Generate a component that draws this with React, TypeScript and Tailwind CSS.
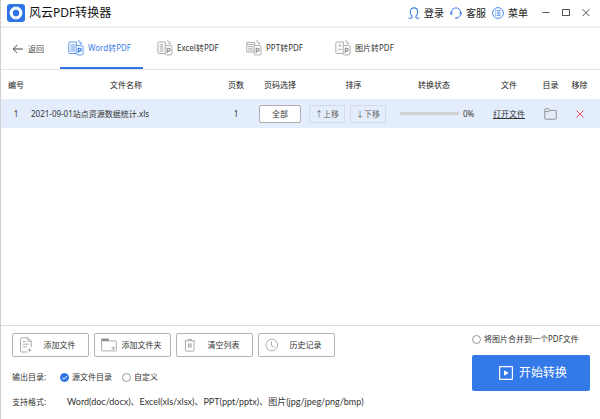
import { useState } from 'react';
import type { ReactNode } from 'react';

type TabId = 'word' | 'excel' | 'ppt' | 'image';

const tabs: { id: TabId; title: string }[] = [
  { id: 'word', title: 'Word转PDF' },
  { id: 'excel', title: 'Excel转PDF' },
  { id: 'ppt', title: 'PPT转PDF' },
  { id: 'image', title: '图片转PDF' }
];

const files = [
  { name: '2021-09-01站点资源数据统计.xls', pages: 1, progress: 0 }
];

function Logo() {
  return (
    <svg width="18" height="18" viewBox="0 0 18 18" aria-hidden="true">
      <rect width="18" height="18" rx="3" fill="#2f74e6" />
      <circle cx="9" cy="9" r="4.8" fill="none" stroke="#fff" strokeWidth="3.2" />
      <path d="M9 2.600v3.200M9 12.200v3.200" stroke="#9fc1f7" strokeWidth="0.8" />
    </svg>
  );
}

function UserIcon() {
  return (
    <svg width="12" height="12" viewBox="0 0 12 12" fill="none" stroke="#3b7fe8" strokeWidth="1.100" aria-hidden="true">
      <path d="M.5 11.200h2c1.400 0 2-.9 1.400-2C2.900 8 2.300 6.400 2.300 4.700 2.300 2.400 3.900.9 6 .9s3.700 1.500 3.700 3.800c0 1.700-.6 3.300-1.600 4.500-.6 1.100 0 2 1.400 2h2" />
    </svg>
  );
}

function HeadsetIcon() {
  return (
    <svg width="12" height="12" viewBox="0 0 12 12" fill="none" stroke="#3b7fe8" aria-hidden="true">
      <path d="M1.500 5C1.800 2.500 3.600.9 6 .9S10.200 2.500 10.500 5" />
      <path d="M1.300 4.800v3M10.700 4.800v3" strokeWidth="1.800" />
      <path d="M10.500 7.800c-.4 1.600-1.500 2.800-3.300 3.100" />
      <path d="M5.300 11h2" strokeWidth="1.500" />
    </svg>
  );
}

function MenuIcon() {
  return (
    <svg width="12" height="12" viewBox="0 0 12 12" fill="none" stroke="#3b7fe8" aria-hidden="true">
      <circle cx="6" cy="6" r="5.400" strokeWidth="0.900" />
      <path d="M4.700 3.800h4M4.700 6h4M4.700 8.200h4M2.900 3.800h1M2.900 6h1M2.900 8.200h1" />
    </svg>
  );
}

function ConvertIcon({ id }: { id: TabId }) {
  return (
    <svg width="16" height="16" viewBox="0 0 16 16" fill="none" stroke="currentColor" strokeWidth="0.8" aria-hidden="true">
      {id === 'ppt' ? (
        <>
          <path d="M8 12H.8V2.500h8V5" />
          <path d="M.8 4.500h8M2.200 6.500h5M2.200 8.200h5M2.200 10h5" strokeWidth="1.100" strokeDasharray="1.500 .5" />
        </>
      ) : (
        <path d="M8 13.500H2c-.8 0-1.200-.4-1.200-1.200V3.200C.8 2.400 1.200 2 2 2h6.600v3" />
      )}
      {id === 'word' && <path d="M2.500 5h5M2.500 7h4.500M2.500 9h4.500M2.500 11h4.500" />}
      {id === 'excel' && <path d="M2.500 5h5M2.500 7h4.500M2.500 9h4.500M2.500 11h4.500M4.800 4v8" strokeDasharray="1.500 .7" />}
      {id === 'image' && (
        <>
          <circle cx="5" cy="5.500" r="0.900" />
          <path d="M2.500 11l2-2.500 1.500 1.500 1-1" />
        </>
      )}
      <path d="M10 .8c1.800 0 2.700 1 2.800 3M11.400 2.800l1.400 1.400 1.200-1.500" />
      <path d="M8.200 5.600h5.600c.8 0 1.200.4 1.200 1.200v6.900c0 .8-.4 1.200-1.200 1.200H9.400c-.8 0-1.200-.4-1.200-1.200z" />
      <path d="M10.300 13V8.300h1.500a1.300 1.300 0 010 2.700h-1.500" strokeWidth="1.300" />
    </svg>
  );
}

function AddFileIcon() {
  return (
    <svg width="16" height="16" viewBox="0 0 16 16" fill="none" stroke="#999" strokeWidth="0.8" aria-hidden="true">
      <path d="M8.500 15H2.600c-.7 0-1.100-.4-1.100-1.100V1.900C1.500 1.200 1.900.8 2.600.8H9l3.300 3.300V10M9 .8v3.400h3.300" />
      <path d="M3.800 4.500h3M3.800 7.200h6M3.800 9.900h4" />
      <path d="M10.500 11.300v3.700M8.700 13.100h3.700" />
    </svg>
  );
}

function AddFolderIcon() {
  return (
    <svg width="16" height="16" viewBox="0 0 16 16" fill="none" stroke="#999" strokeWidth="0.8" aria-hidden="true">
      <path d="M.6 3.500V13c0 .6.3.9.9.9h13c.6 0 .9-.3.900-.9V4.800c0-.6-.3-.9-.9-.9H.6" />
      <path d="M.3 2.700h7.500" strokeWidth="2.200" stroke="#888" />
      <path d="M12.300 9.200v3.800M10.400 11.100h3.800" />
    </svg>
  );
}

function TrashIcon() {
  return (
    <svg width="16" height="16" viewBox="0 0 16 16" fill="none" stroke="#999" strokeWidth="0.8" aria-hidden="true">
      <path d="M2.500 4v9.200c0 .6.300.9.900.9h6.700c.6 0 .9-.3.900-.9V4M1.500 3.800H12M4.800 3.600V2.500h4v1.100M5.500 6.300v4.500M6.800 6.300v4.500M8.100 6.300v4.500" />
    </svg>
  );
}

function ClockIcon() {
  return (
    <svg width="16" height="16" viewBox="0 0 16 16" fill="none" stroke="#999" strokeWidth="0.8" aria-hidden="true">
      <circle cx="6.800" cy="8" r="5.800" />
      <path d="M6.500 4.300v4.300l3 1.300" />
    </svg>
  );
}

const actions = [
  { title: '添加文件', icon: <AddFileIcon /> },
  { title: '添加文件夹', icon: <AddFolderIcon /> },
  { title: '清空列表', icon: <TrashIcon /> },
  { title: '历史记录', icon: <ClockIcon /> }
];

function HeaderLink({ icon, children }: { icon: ReactNode; children: ReactNode }) {
  return (
    <button className="flex items-center gap-1 text-[10px] leading-3">
      {icon}
      {children}
    </button>
  );
}

function TitleBar() {
  return (
    <header className="flex h-7 items-center border-b-2 border-[#eeeeee] pl-1.5 pr-2.5">
      <Logo />
      <h1 className="ml-1 text-[12px] leading-4 text-[#111]">风云PDF转换器</h1>
      <div className="ml-auto flex items-center gap-1.5 text-[#222]">
        <HeaderLink icon={<UserIcon />}>登录</HeaderLink>
        <HeaderLink icon={<HeadsetIcon />}>客服</HeaderLink>
        <HeaderLink icon={<MenuIcon />}>菜单</HeaderLink>
      </div>
      <div className="ml-3.5 flex items-center gap-3 text-[#555]">
        <button aria-label="最小化">
          <svg width="8" height="8" viewBox="0 0 8 8" stroke="currentColor"><path d="M.5 3.500h7" /></svg>
        </button>
        <button aria-label="最大化">
          <svg width="8" height="8" viewBox="0 0 8 8" fill="none" stroke="currentColor"><rect x=".5" y=".5" width="7" height="6" /></svg>
        </button>
        <button aria-label="关闭">
          <svg width="8" height="8" viewBox="0 0 8 8" stroke="currentColor"><path d="M.5.2l7 7M7.500.2l-7 7" /></svg>
        </button>
      </div>
    </header>
  );
}

function TabBar({ active, onChange }: { active: TabId; onChange: (id: TabId) => void }) {
  return (
    <nav className="flex h-[42px] border-b border-[#e4e4e4]">
      <button className="flex w-[59px] shrink-0 items-center gap-1 pl-[11px] text-[#444]">
        <svg width="12" height="12" viewBox="0 0 12 12" fill="none" stroke="currentColor" aria-hidden="true">
          <path d="M11 6H1.200M5.200 2L1.200 6l4 4" />
        </svg>
        返回
      </button>
      <div className="flex gap-1.5">
        {tabs.map((tab) => (
          <button
            key={tab.id}
            onClick={() => onChange(tab.id)}
            className={`flex w-[83px] items-center gap-1 border-b-2 pl-2 ${
              tab.id === active ? 'border-[#2f74e6] text-[#3b7fe8]' : 'border-transparent text-[#333]'
            }`}
          >
            <span className={tab.id === active ? 'text-[#3b7fe8]' : 'text-[#999]'}>
              <ConvertIcon id={tab.id} />
            </span>
            {tab.title}
          </button>
        ))}
      </div>
    </nav>
  );
}

function FileTable() {
  return (
    <table className="w-full table-fixed text-center">
      <colgroup>
        <col className="w-[30px]" />
        <col />
        <col className="w-[30px]" />
        <col className="w-[58px]" />
        <col className="w-[89px]" />
        <col className="w-[84px]" />
        <col className="w-[54px]" />
        <col className="w-[29px]" />
        <col className="w-[35px]" />
      </colgroup>
      <thead>
        <tr className="h-[29px] text-[#222]">
          <th className="font-normal">编号</th>
          <th className="font-normal">文件名称</th>
          <th className="font-normal">页数</th>
          <th className="font-normal">页码选择</th>
          <th className="font-normal">排序</th>
          <th className="pr-3 font-normal">转换状态</th>
          <th className="font-normal">文件</th>
          <th className="font-normal">目录</th>
          <th className="pr-1.5 font-normal">移除</th>
        </tr>
      </thead>
      <tbody>
        {files.map((file, index) => (
          <tr key={file.name} className="h-[29px] bg-[#e4edfb]">
            <td>{index + 1}</td>
            <td className="text-left">{file.name}</td>
            <td>{file.pages}</td>
            <td>
              <button className="h-[18px] w-[42px] rounded-xs border border-[#b0b0b0] bg-white align-middle">全部</button>
            </td>
            <td className="pr-3">
              <div className="flex justify-center gap-[5px]">
                <button className="h-[18px] w-9 shrink-0 border border-[#d4dbe6] text-[#666]">↑上移</button>
                <button className="h-[18px] w-9 shrink-0 border border-[#d4dbe6] text-[#666]">↓下移</button>
              </div>
            </td>
            <td>
              <div className="flex items-center gap-1 pl-0.5">
                <div className="h-[3px] w-[59px] bg-[#d2d2d2]">
                  <div className="h-full bg-[#2f74e6]" style={{ width: `${file.progress}%` }} />
                </div>
                {file.progress}%
              </div>
            </td>
            <td>
              <a href="#open" className="underline underline-offset-1">打开文件</a>
            </td>
            <td>
              <button aria-label="打开目录" className="align-middle">
                <svg width="13" height="12" viewBox="0 0 13 12" fill="none" stroke="#888" strokeWidth="0.9">
                  <path d="M.8 3.600V1.500C.8 1 1 .8 1.500.8h3.300l1.200 1.600h5.500c.5 0 .7.200.7.700v7.400c0 .5-.2.700-.7.700h-10c-.5 0-.7-.2-.7-.7V3.600h4.200L6 2.400" />
                </svg>
              </button>
            </td>
            <td className="pr-1.5">
              <button aria-label="移除" className="align-middle">
                <svg width="8" height="8" viewBox="0 0 8 8" stroke="#e8505b">
                  <path d="M.5.5l7 7M7.500.5l-7 7" />
                </svg>
              </button>
            </td>
          </tr>
        ))}
      </tbody>
    </table>
  );
}

type ChoiceProps = {
  type: 'radio' | 'checkbox';
  label: string;
  checked: boolean;
  onChange: () => void;
};

function Choice({ type, label, checked, onChange }: ChoiceProps) {
  return (
    <label className="flex items-center gap-[3px]">
      <span className="relative flex">
        <input
          type={type}
          checked={checked}
          onChange={onChange}
          className="size-[9px] appearance-none rounded-full border border-[#999] bg-white checked:border-[#2f74e6] checked:bg-[#2f74e6]"
        />
        {checked && (
          <svg className="pointer-events-none absolute inset-0" width="9" height="9" viewBox="0 0 9 9" fill="none" stroke="#fff">
            <path d="M2.300 4.600l1.700 1.600 2.900-3.200" />
          </svg>
        )}
      </span>
      {label}
    </label>
  );
}

export default function App() {
  const [activeTab, setActiveTab] = useState<TabId>('word');
  const [output, setOutput] = useState('source');
  const [merge, setMerge] = useState(false);

  return (
    <div className="flex min-h-screen flex-col border-l border-[#cfcfcf] bg-white font-['Noto_Sans','Noto_Sans_CJK_SC',sans-serif] text-[8px] leading-3 text-[#333]">
      <TitleBar />
      <TabBar active={activeTab} onChange={setActiveTab} />
      <main className="flex-1">
        <FileTable />
      </main>
      <footer className="flex justify-between border-t border-[#dcdcdc] pb-[11px] pl-[11px] pr-2.5 pt-[7px]">
        <div>
          <div className="flex gap-[5px]">
            {actions.map((action) => (
              <button
                key={action.title}
                className="flex h-6 w-[77px] items-center rounded-xs border border-[#b4b4b4] pl-1.5 pr-1"
              >
                {action.icon}
                <span className="flex-1 text-center">{action.title}</span>
              </button>
            ))}
          </div>
          <div className="mt-3.5 flex items-center">
            <span className="w-12">输出目录:</span>
            <div className="flex gap-2.5">
              <Choice type="radio" label="源文件目录" checked={output === 'source'} onChange={() => setOutput('source')} />
              <Choice type="radio" label="自定义" checked={output === 'custom'} onChange={() => setOutput('custom')} />
            </div>
          </div>
          <div className="mt-[13px] flex">
            <span className="w-[55px]">支持格式:</span>
            <span className="font-[Lato,'Noto_Sans_CJK_SC',sans-serif] text-[9px]">
              Word(doc/docx)、Excel(xls/xlsx)、PPT(ppt/pptx)、图片(jpg/jpeg/png/bmp)
            </span>
          </div>
        </div>
        <div>
          <Choice type="checkbox" label="将图片合并到一个PDF文件" checked={merge} onChange={() => setMerge(!merge)} />
          <button className="mt-2.5 flex h-9 w-[118px] items-center justify-center gap-1.5 rounded-xs bg-[#3479e8] pl-1 text-[12px] text-white">
            <svg width="14" height="14" viewBox="0 0 14 14" fill="none" stroke="#fff" aria-hidden="true">
              <rect x=".6" y=".6" width="12.800" height="12.800" rx=".5" strokeWidth="1.200" />
              <path d="M5 4.200v5.600L9.700 7z" fill="#fff" stroke="none" />
            </svg>
            开始转换
          </button>
        </div>
      </footer>
    </div>
  );
}
